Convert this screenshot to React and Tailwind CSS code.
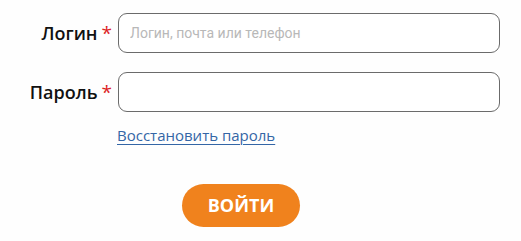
import React, { useState } from 'react';

const App = () => {
    const [login, setLogin] = useState('');
    const [password, setPassword] = useState('');

    return (
        <div className="min-h-screen bg-[#fefefe] pt-[13px] font-['Open_Sans',sans-serif]">
            {/* Login row */}
            <div className="flex items-center">
                <label className="w-[118px] flex justify-end items-center pr-[6px] text-[18px] font-semibold text-[#111]">
                    Логин<span className="ml-[4px] text-[#dd1f26] text-[19px] font-normal">*</span>
                </label>
                <input
                    className="w-[382px] h-[40px] rounded-[9px] border border-[#6b6b6b] bg-white px-[11px] text-[14px] text-[#333] font-['Roboto',sans-serif] placeholder:text-[#b8b8b8] outline-none"
                    placeholder="Логин, почта или телефон"
                    value={login}
                    onChange={(e) => setLogin(e.target.value)}
                />
            </div>

            {/* Password row */}
            <div className="flex items-center mt-[19px]">
                <label className="w-[118px] flex justify-end items-center pr-[6px] text-[18px] font-semibold text-[#111]">
                    Пароль<span className="ml-[4px] text-[#dd1f26] text-[19px] font-normal">*</span>
                </label>
                <input
                    type="password"
                    className="w-[382px] h-[40px] rounded-[9px] border border-[#6b6b6b] bg-white px-[11px] text-[14px] outline-none"
                    value={password}
                    onChange={(e) => setPassword(e.target.value)}
                />
            </div>

            <div className="pl-[117px] mt-[11px]">
                <a href="#" className="text-[15px] text-[#3466a6] underline underline-offset-[3px] decoration-[1px]">
                    Восстановить пароль
                </a>
            </div>

            <div className="pl-[182px] mt-[37px]">
                <button className="w-[118px] h-[43px] rounded-full bg-[#f0821d] text-white text-[18px] font-bold">
                    ВОЙТИ
                </button>
            </div>
        </div>
    );
};

export default App;
